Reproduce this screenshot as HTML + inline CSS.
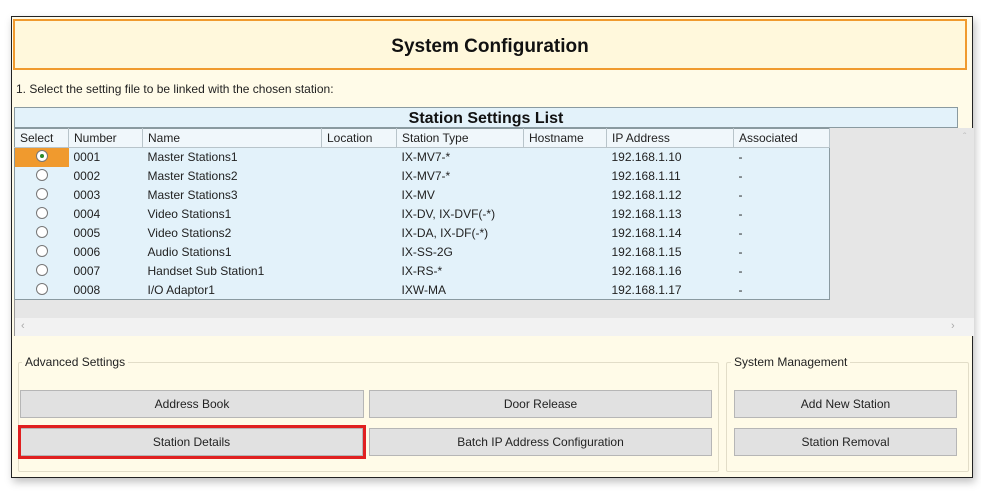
<!DOCTYPE html>
<html><head><meta charset="utf-8"><style>
*{box-sizing:border-box;margin:0;padding:0}
body{width:981px;height:492px;background:#fff;font-family:"Liberation Sans",Arial,sans-serif;position:relative;overflow:hidden;color:#222}
.a{position:absolute}
#frame{left:11px;top:16px;width:962px;height:462px;border:1px solid #222;background:#fffbe8;box-shadow:2px 4px 8px rgba(0,0,0,.25)}
#title{left:13px;top:19px;width:954px;height:51px;border:2px solid #f09a2e;background:#fff8dc;font-weight:bold;font-size:19px;text-align:center;line-height:51px;color:#111}
.t{font-size:12px;color:#222}
#slbar{left:14px;top:107px;width:944px;height:21px;background:#e3f2fa;border:1px solid #8a9aa0;font-weight:bold;font-size:16px;text-align:center;line-height:21px;color:#111}
#gray{left:14px;top:128px;width:960px;height:190px;background:#e6e6e6;border-left:1px solid #999}
#hs{left:14px;top:318px;width:960px;height:18px;background:#f2f2f2;border-left:1px solid #999}
table{position:absolute;left:14px;top:128px;border-collapse:collapse;background:#e3f2fa;font-size:12px;border:1px solid #8a9aa0}
td{height:19px;padding:0 5px;white-space:nowrap;color:#222}
tr.h td{height:19px;border-right:1px solid #b8c4ca;border-bottom:1px solid #b8c4ca;background:#f0f7fb}
td.r{text-align:center;padding:0}
.rad{display:inline-block;width:12px;height:12px;border:1px solid #777;border-radius:50%;background:#fff;vertical-align:middle;position:relative;top:-2px}
.sel{background:#f09a2e}
.rad.on::after{content:"";display:block;width:4px;height:4px;border-radius:50%;background:#2a8a2a;margin:3px}
fieldset{position:absolute;border:1px solid #e2ddc8;border-radius:2px}
.lg{position:absolute;font-size:12px;background:#fffbe8;padding:0 3px}
.b{position:absolute;height:28px;background:#e1e1e1;border:1px solid #b6b6b6;font-size:12px;text-align:center;line-height:26px;color:#222}
</style></head><body>
<div class="a" id="frame"></div>
<div class="a" id="title">System Configuration</div>
<div class="a t" style="left:16px;top:82px">1. Select the setting file to be linked with the chosen station:</div>
<div class="a" id="gray"></div>
<div class="a" id="hs"><span style="position:absolute;left:6px;top:2px;font-size:11px;color:#aaa">&lsaquo;</span><span style="position:absolute;left:936px;top:2px;font-size:11px;color:#aaa">&rsaquo;</span></div>
<div class="a" style="left:963px;top:132px;font-size:10px;color:#bbb">&#710;</div>
<div class="a" id="slbar">Station Settings List</div>
<table>
<colgroup><col style="width:54px"><col style="width:74px"><col style="width:179px"><col style="width:75px"><col style="width:127px"><col style="width:83px"><col style="width:127px"><col style="width:96px"></colgroup>
<tr class="h"><td>Select</td><td>Number</td><td>Name</td><td>Location</td><td>Station Type</td><td>Hostname</td><td>IP Address</td><td>Associated</td></tr>
<tr><td class="r sel"><span class="rad on"></span></td><td>0001</td><td>Master Stations1</td><td></td><td>IX-MV7-*</td><td></td><td>192.168.1.10</td><td>-</td></tr>
<tr><td class="r"><span class="rad"></span></td><td>0002</td><td>Master Stations2</td><td></td><td>IX-MV7-*</td><td></td><td>192.168.1.11</td><td>-</td></tr>
<tr><td class="r"><span class="rad"></span></td><td>0003</td><td>Master Stations3</td><td></td><td>IX-MV</td><td></td><td>192.168.1.12</td><td>-</td></tr>
<tr><td class="r"><span class="rad"></span></td><td>0004</td><td>Video Stations1</td><td></td><td>IX-DV, IX-DVF(-*)</td><td></td><td>192.168.1.13</td><td>-</td></tr>
<tr><td class="r"><span class="rad"></span></td><td>0005</td><td>Video Stations2</td><td></td><td>IX-DA, IX-DF(-*)</td><td></td><td>192.168.1.14</td><td>-</td></tr>
<tr><td class="r"><span class="rad"></span></td><td>0006</td><td>Audio Stations1</td><td></td><td>IX-SS-2G</td><td></td><td>192.168.1.15</td><td>-</td></tr>
<tr><td class="r"><span class="rad"></span></td><td>0007</td><td>Handset Sub Station1</td><td></td><td>IX-RS-*</td><td></td><td>192.168.1.16</td><td>-</td></tr>
<tr><td class="r"><span class="rad"></span></td><td>0008</td><td>I/O Adaptor1</td><td></td><td>IXW-MA</td><td></td><td>192.168.1.17</td><td>-</td></tr>
</table>
<fieldset style="left:18px;top:362px;width:701px;height:110px"></fieldset>
<div class="lg" style="left:22px;top:355px">Advanced Settings</div>
<fieldset style="left:726px;top:362px;width:243px;height:110px"></fieldset>
<div class="lg" style="left:731px;top:355px">System Management</div>
<div class="b" style="left:20px;top:390px;width:344px">Address Book</div>
<div class="b" style="left:369px;top:390px;width:343px">Door Release</div>
<div class="b" style="left:20px;top:428px;width:343px">Station Details</div>
<div class="a" style="left:18px;top:425px;width:348px;height:34px;border:3px solid #e02020"></div>
<div class="b" style="left:369px;top:428px;width:343px">Batch IP Address Configuration</div>
<div class="b" style="left:734px;top:390px;width:223px">Add New Station</div>
<div class="b" style="left:734px;top:428px;width:223px">Station Removal</div>
</body></html>
